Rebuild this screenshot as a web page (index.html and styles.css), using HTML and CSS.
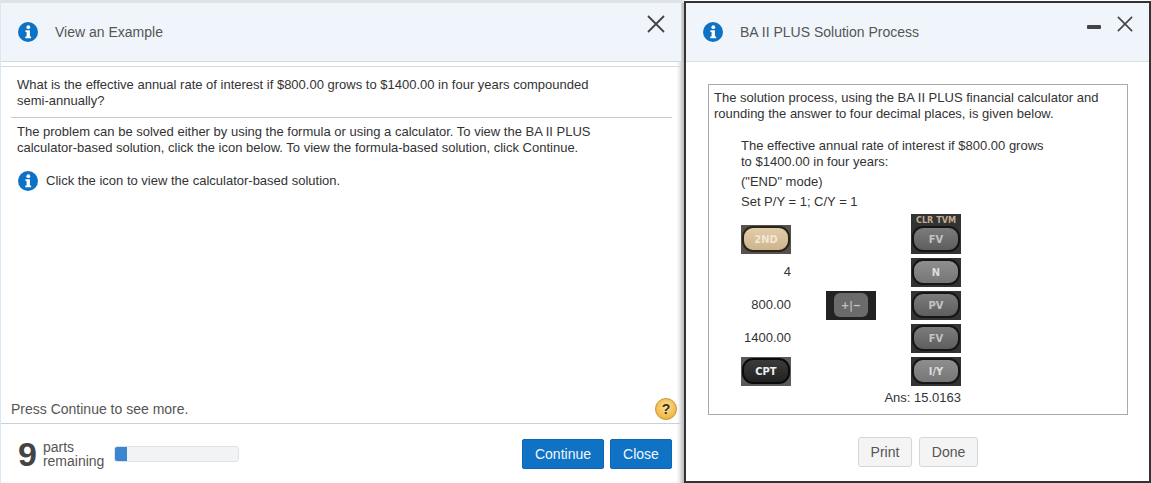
FILE: index.html
```html
<!DOCTYPE html>
<html lang="en">
<head>
  <meta charset="UTF-8" />
  <title>View an Example</title>
  <link rel="stylesheet" href="styles.css">
</head>
<body>
  <svg class="defs" width="0" height="0">
    <symbol id="info" viewBox="0 0 20 20">
      <circle cx="10" cy="10" r="10" fill="#0e72c4" />
      <circle cx="10.3" cy="5.2" r="1.9" fill="#fff" />
      <path d="M7.4 8.2h4.5v6.2h1.2v1.9H7.3v-1.9h1.3v-4.3H7.4z" fill="#fff" />
    </symbol>
  </svg>

  <div class="example">
    <div class="header">
      <svg class="info-icon"><use href="#info" /></svg>
      <span class="title">View an Example</span>
      <svg class="close-x" viewBox="0 0 18 18"><path d="M1 1l16 16M17 1L1 17" /></svg>
    </div>

    <div class="content">
      <p class="question">What is the effective annual rate of interest if $800.00 grows to $1400.00 in four years compounded<br>semi-annually?</p>
      <p class="intro">The problem can be solved either by using the formula or using a calculator. To view the BA II PLUS<br>calculator-based solution, click the icon below. To view the formula-based solution, click Continue.</p>
      <div class="note">
        <svg class="note-icon"><use href="#info" /></svg>
        <span>Click the icon to view the calculator-based solution.</span>
      </div>
    </div>

    <div class="status">
      <span>Press Continue to see more.</span>
      <span class="help">?</span>
    </div>

    <div class="footer">
      <span class="count">9</span>
      <span class="count-label">parts<br>remaining</span>
      <div class="progress"><div class="progress-fill"></div></div>
      <div class="footer-actions">
        <button class="btn-blue continue-btn">Continue</button>
        <button class="btn-blue close-btn">Close</button>
      </div>
    </div>
  </div>

  <div class="dialog">
    <div class="dialog-header">
      <svg class="info-icon"><use href="#info" /></svg>
      <span class="title">BA II PLUS Solution Process</span>
      <span class="minimize"></span>
      <svg class="close-x" viewBox="0 0 18 18"><path d="M1 1l16 16M17 1L1 17" /></svg>
    </div>

    <div class="solution">
      <p class="solution-intro">The solution process, using the BA II PLUS financial calculator and<br>rounding the answer to four decimal places, is given below.</p>
      <div class="steps">
        <p class="step-lead">The effective annual rate of interest if $800.00 grows<br>to $1400.00 in four years:</p>
        <p class="step-line">("END" mode)</p>
        <p class="step-line">Set P/Y = 1; C/Y = 1</p>

        <div class="keys">
          <div class="key key-second"><span>2ND</span></div>
          <div class="empty"></div>
          <div class="key-tall">
            <span class="key-top">CLR TVM</span>
            <div class="key"><span>FV</span></div>
          </div>

          <div class="val">4</div>
          <div class="empty"></div>
          <div class="key key-light"><span>N</span></div>

          <div class="val">800.00</div>
          <div class="key key-sign"><span>+|&minus;</span></div>
          <div class="key"><span>PV</span></div>

          <div class="val">1400.00</div>
          <div class="empty"></div>
          <div class="key"><span>FV</span></div>

          <div class="key key-dark"><span>CPT</span></div>
          <div class="empty"></div>
          <div class="key key-light"><span>I/Y</span></div>
        </div>
        <div class="answer">Ans: 15.0163</div>
      </div>
    </div>

    <div class="dialog-footer">
      <button class="btn-plain print-btn">Print</button>
      <button class="btn-plain done-btn">Done</button>
    </div>
  </div>
</body>
</html>
```

FILE: styles.css
```css
* {
  box-sizing: border-box;
}

body {
  font-family: 'Liberation Sans', Arial, sans-serif;
  font-size: 13px;
  color: #333;
  background-color: #fff;
  margin: 0;
  padding: 0;
  width: 1151px;
  height: 483px;
  display: flex;
  overflow: hidden;
}

p {
  margin: 0;
}

.defs {
  position: absolute;
}

/* left panel */
.example {
  width: 684px;
  height: 483px;
  display: flex;
  flex-direction: column;
  border-top: 3px solid #dfe3e6;
  border-left: 1px solid #dbe8f4;
  box-shadow: inset -6px 0 5px -3px rgba(0, 0, 0, 0.3);
}

.header {
  height: 59px;
  flex: none;
  display: flex;
  align-items: center;
  background-color: #f0f5fb;
  border-bottom: 1px solid #d4d9de;
  padding-left: 17px;
  margin-right: 3px;
}

.info-icon {
  width: 20px;
  height: 20px;
  flex: none;
}

.title {
  font-size: 14px;
  color: #555;
  margin-left: 17px;
}

.close-x {
  width: 18px;
  height: 18px;
  flex: none;
}

.close-x path {
  stroke: #444;
  stroke-width: 1.8;
  fill: none;
}

.header .close-x {
  margin-left: auto;
  margin-right: 16px;
  margin-top: -16px;
}

.content {
  flex: 1;
  margin-top: 4px;
  border-top: 1px solid #d4d9de;
  margin-right: 3px;
}

.question {
  line-height: 16px;
  padding: 10px 0 8px 6px;
  margin: 0 9px 0 10px;
  border-bottom: 1px solid #ccc;
}

.intro {
  line-height: 16px;
  padding: 6px 0 0 16px;
}

.note {
  display: flex;
  align-items: center;
  margin: 15px 0 0 17px;
}

.note-icon {
  width: 20px;
  height: 20px;
  margin-right: 8px;
}

.note span {
  margin-top: -2px;
}

.status {
  height: 34px;
  flex: none;
  display: flex;
  align-items: center;
  justify-content: space-between;
  font-size: 14px;
  color: #555;
  padding: 5px 4px 0 10px;
  border-bottom: 1px solid #ccd0d4;
  margin-right: 3px;
}

.help {
  width: 22px;
  height: 22px;
  border-radius: 50%;
  display: flex;
  align-items: center;
  justify-content: center;
  font-weight: bold;
  color: #3d3320;
  font-size: 14px;
  background: radial-gradient(circle at 50% 40%, #fbe39a, #eeb13c 80%);
  border: 1px solid #c9962f;
}

.footer {
  height: 59px;
  flex: none;
  display: flex;
  align-items: center;
  padding: 0 12px 0 17px;
}

.count {
  font-size: 34px;
  font-weight: bold;
  color: #444;
  line-height: 36px;
}

.count-label {
  font-size: 14px;
  line-height: 14px;
  color: #555;
  margin-left: 6px;
  width: 71px;
}

.progress {
  width: 125px;
  height: 16px;
  background-color: #f1f3f4;
  border: 1px solid #dfe3e5;
  border-radius: 3px;
  overflow: hidden;
}

.progress-fill {
  width: 13px;
  height: 16px;
  margin: -1px 0 0 -1px;
  background-color: #3c85cf;
}

.footer-actions {
  margin-left: auto;
  display: flex;
  gap: 6px;
}

.btn-blue {
  height: 30px;
  background-color: #0f72c4;
  color: #f2f7fc;
  border: 1px solid #0d68b4;
  border-radius: 2px;
  font-family: inherit;
  font-size: 14px;
  padding: 0;
}

.continue-btn {
  width: 82px;
}

.close-btn {
  width: 62px;
}

/* right dialog */
.dialog {
  width: 467px;
  height: 482px;
  margin-top: 1px;
  display: flex;
  flex-direction: column;
  border: 2px solid #333;
}

.dialog-header {
  height: 59px;
  flex: none;
  display: flex;
  align-items: center;
  background-color: #f0f5fb;
  border-bottom: 1px solid #d9dee3;
  padding-left: 17px;
}

.dialog-header .title {
  margin-left: 17px;
}

.minimize {
  width: 14px;
  height: 4px;
  background-color: #444;
  border-radius: 1px;
  margin-left: auto;
  margin-right: 16px;
  margin-top: -11px;
}

.dialog-header .close-x {
  width: 16px;
  height: 16px;
  margin-right: 16px;
  margin-top: -17px;
}

.solution {
  margin: 22px 21px 0 22px;
  height: 331px;
  flex: none;
  border: 1px solid #aaa;
  padding: 5px 5px 0 5px;
}

.solution-intro {
  line-height: 16px;
}

.steps {
  margin: 16px 0 0 27px;
  width: 220px;
}

.step-lead {
  line-height: 16px;
  white-space: nowrap;
}

.step-line {
  line-height: 16px;
  margin-top: 4px;
}

.keys {
  display: grid;
  grid-template-columns: 50px 50px 50px;
  grid-template-rows: 40px 29px 29px 29px 29px;
  column-gap: 35px;
  row-gap: 4px;
  margin-top: 4px;
}

.val {
  text-align: right;
  align-self: center;
  padding-bottom: 2px;
}

.key {
  height: 29px;
  background-color: #333;
  padding: 1px 1px 2px;
  align-self: end;
}

.key span {
  display: flex;
  align-items: center;
  justify-content: center;
  height: 100%;
  border-radius: 11px;
  border: 2px solid #161616;
  background: linear-gradient(#7c7c7c, #5e5e5e);
  color: #c4c4c4;
  font-family: 'DejaVu Sans', sans-serif;
  font-stretch: condensed;
  font-weight: bold;
  font-size: 11px;
}

.key-light span {
  background: linear-gradient(#8e8e8e, #767676);
  color: #ddd;
}

.key-second {
  background-color: #55524d;
}

.key-second span {
  background: linear-gradient(#e2cda9, #cdb48d);
  color: #f1e7d6;
  border-color: #2a241a;
}

.key-dark {
  background-color: #5a5a5a;
}

.key-dark span {
  background: linear-gradient(#3b3b3b, #222);
  color: #eee;
  border-color: #0a0a0a;
}

.key-sign {
  background-color: #222;
  padding: 2px 8px 3px;
}

.key-sign span {
  border-radius: 6px;
  border: none;
  background: #6b6b6b;
}

.key-tall {
  height: 40px;
  background-color: #333;
  display: flex;
  flex-direction: column;
}

.key-top {
  height: 11px;
  flex: none;
  line-height: 13px;
  text-align: center;
  font-family: 'DejaVu Sans', sans-serif;
  font-stretch: condensed;
  font-weight: bold;
  font-size: 9px;
  color: #c2ae90;
}

.key-tall .key {
  align-self: stretch;
}

.answer {
  text-align: right;
  width: 220px;
  margin-top: 4px;
  line-height: 16px;
}

.dialog-footer {
  display: flex;
  justify-content: flex-end;
  gap: 7px;
  margin: 22px 171px 0 0;
}

.btn-plain {
  height: 30px;
  background-color: #f4f4f4;
  color: #555;
  border: 1px solid #d6d6d6;
  border-radius: 3px;
  font-family: inherit;
  font-size: 14px;
  padding: 0;
}

.print-btn {
  width: 54px;
}

.done-btn {
  width: 59px;
}
```
